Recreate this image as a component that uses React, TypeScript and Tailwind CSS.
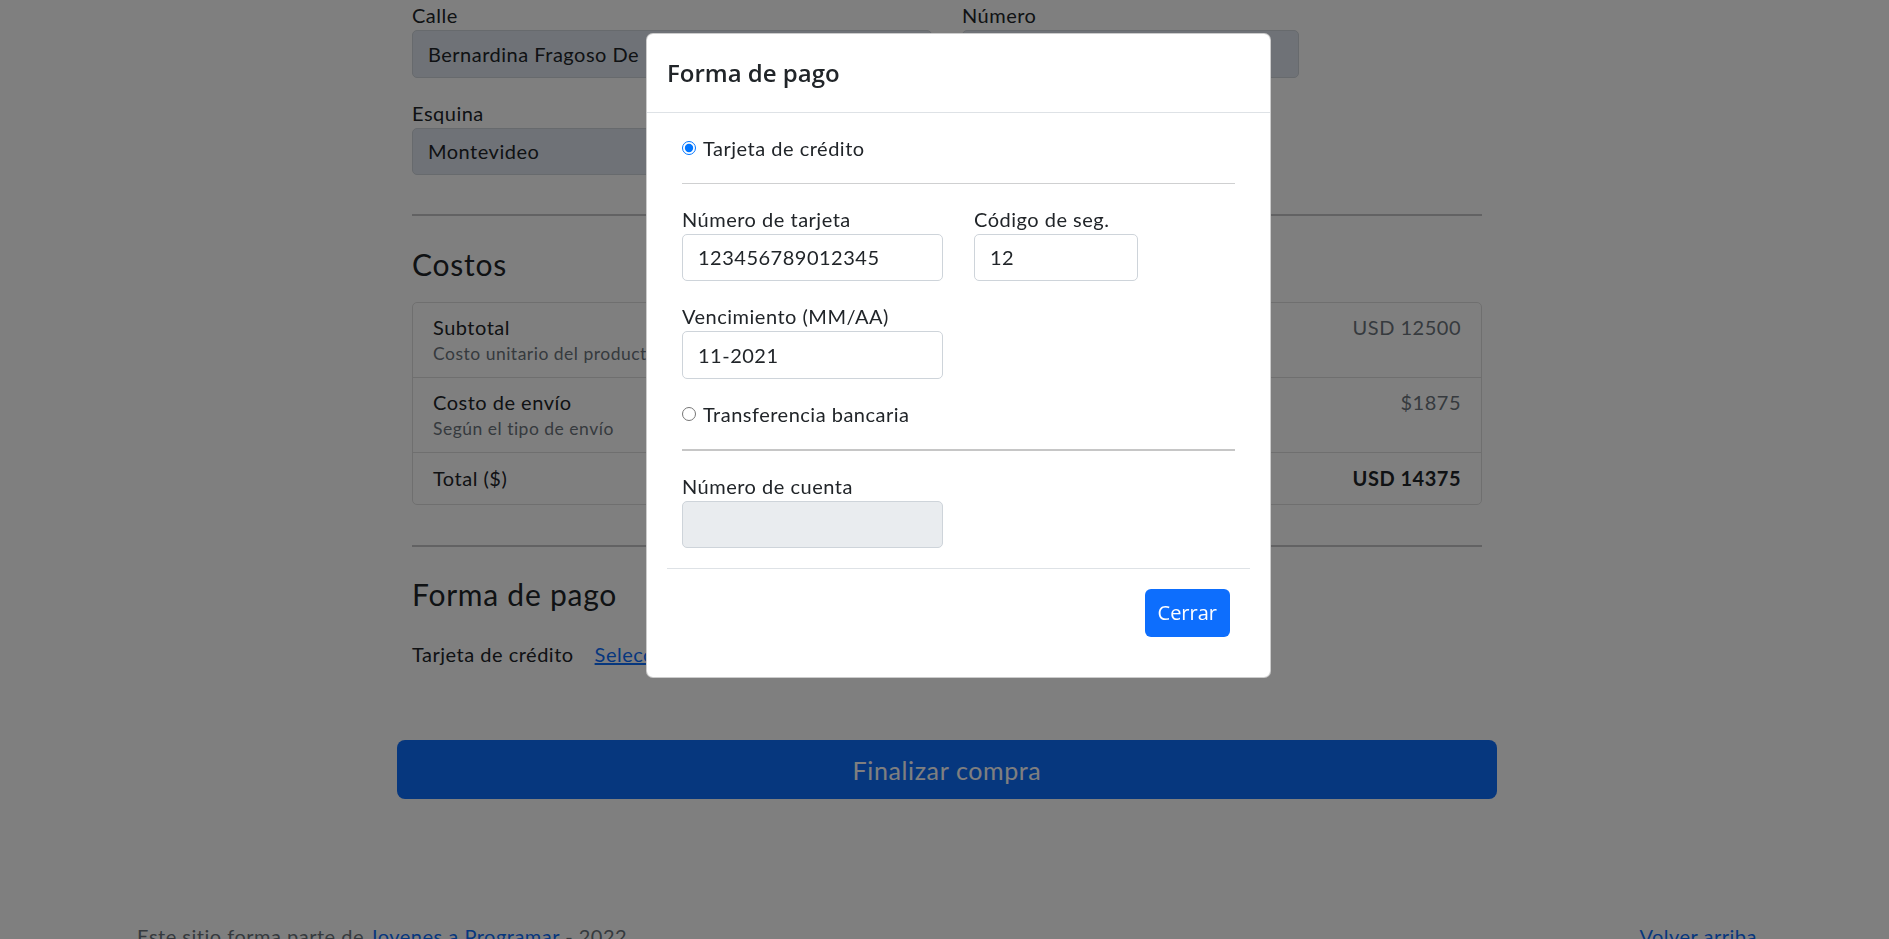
const pageInput =
  "block h-[47.5px] w-full rounded-[5px] border border-[#ced4da] bg-[#dfe5ef] px-[15px] text-[20px] text-[#212529] outline-none";

const modalInput =
  "block h-[47.5px] w-full rounded-[5px] border border-[#ced4da] px-[15px] text-[20px] text-[#212529] outline-none";

const CostRow = ({
  title,
  note,
  value,
}: {
  title: string;
  note: string;
  value: string;
}) => (
  <li className="flex justify-between border-b border-[#dfdfdf] px-[20px] py-[10px]">
    <div>
      <h6 className="text-[20px] font-normal leading-[28px]">{title}</h6>
      <small className="block text-[17.5px] leading-[26px] text-[#6c757d]">{note}</small>
    </div>
    <span className="leading-[28px] text-[#6c757d]">{value}</span>
  </li>
);

export default function App() {
  return (
    <div className="relative h-screen overflow-hidden bg-white pl-[5px] font-['Lato',sans-serif] text-[20px] leading-[30px] tracking-[0.025em] text-[#212529]">
      {/* Page content behind the modal */}
      <main className="mx-auto w-[1100px]">
        <div className="px-[15px]">
          <div className="flex gap-[30px]">
            <div className="w-[520px]">
              <label className="block">Calle</label>
              <input className={pageInput} defaultValue="Bernardina Fragoso De" readOnly />
              <label className="mt-[20px] block">Esquina</label>
              <input className={pageInput} defaultValue="Montevideo" readOnly />
            </div>
            <div className="w-[337px]">
              <label className="block">Número</label>
              <input className={pageInput} defaultValue="" readOnly />
            </div>
          </div>

          <hr className="mt-[39px] border-t-2 border-[#c4c5c6]" />

          <h4 className="mt-[30px] text-[30px] font-normal leading-[36px] tracking-[0.025em]">Costos</h4>
          <ul className="mt-[20px] rounded-[5px] border border-[#dfdfdf]">
            <CostRow title="Subtotal" note="Costo unitario del producto por cantidad" value="USD 12500" />
            <CostRow title="Costo de envío" note="Según el tipo de envío" value="$1875" />
            <li className="flex justify-between px-[20px] py-[10px] leading-[31px]">
              <span>Total ($)</span>
              <strong>USD 14375</strong>
            </li>
          </ul>

          <hr className="mt-[40px] border-t-2 border-[#c4c5c6]" />

          <h4 className="mt-[29px] text-[30px] font-normal leading-[36px] tracking-[0.025em]">Forma de pago</h4>
          <div className="mt-[27px] flex">
            <span>Tarjeta de crédito</span>
            <a href="#" className="ml-[21px] text-[#0d6efd] underline">
              Seleccionar
            </a>
          </div>
        </div>

        <button className="mt-[71px] h-[59px] w-full rounded-[8px] bg-[#0d6efd] text-[25px] tracking-[0.025em] text-white">
          Finalizar compra
        </button>
      </main>

      <footer className="mx-auto mt-[122px] flex w-[1650px] justify-between px-[15px] text-[#6c757d]">
        <p>
          Este sitio forma parte de{" "}
          <a href="#" className="text-[#0d6efd]">
            Jovenes a Programar
          </a>{" "}
          - 2022
        </p>
        <a href="#" className="text-[#0d6efd]">
          Volver arriba
        </a>
      </footer>

      {/* Backdrop */}
      <div className="fixed inset-0 bg-black/50" />

      {/* Modal */}
      <div className="fixed left-[646px] top-[33px] w-[625px] rounded-[7px] border border-black/20 bg-white">
        <div className="border-b border-[#dee2e6] px-[20px] py-[20px]">
          <h5 className="font-['Open_Sans',sans-serif] text-[24px] font-semibold leading-[37.5px] tracking-normal text-[#212529]">
            Forma de pago
          </h5>
        </div>
        <div className="p-[20px]">
          <div className="px-[15px] pb-[20px]">
            <label className="flex items-center gap-[7px]">
              <input type="radio" name="pago" defaultChecked className="m-0 h-[14px] w-[14px]" />
              Tarjeta de crédito
            </label>
            <hr className="my-[20px] border-[#cfd0d1]" />
            <div className="flex gap-[31px]">
              <div className="w-[261px]">
                <label className="block">Número de tarjeta</label>
                <input className={`${modalInput} bg-white`} defaultValue="123456789012345" readOnly />
              </div>
              <div className="w-[164px]">
                <label className="block">Código de seg.</label>
                <input className={`${modalInput} bg-white`} defaultValue="12" readOnly />
              </div>
            </div>
            <div className="mt-[20px] w-[261px]">
              <label className="block">Vencimiento (MM/AA)</label>
              <input className={`${modalInput} bg-white`} defaultValue="11-2021" readOnly />
            </div>
            <label className="mt-[20px] flex items-center gap-[7px]">
              <input type="radio" name="pago" className="m-0 h-[14px] w-[14px]" />
              Transferencia bancaria
            </label>
            <hr className="my-[20px] border-t-2 border-[#c6c6c6]" />
            <div className="w-[261px]">
              <label className="block">Número de cuenta</label>
              <input className={`${modalInput} bg-[#e9ecef]`} disabled />
            </div>
          </div>
          <div className="flex justify-end border-t border-[#dee2e6] p-[20px]">
            <button className="h-[48px] rounded-[6px] bg-[#0d6efd] px-[13px] font-['Open_Sans',sans-serif] text-[20px] tracking-normal text-white">
              Cerrar
            </button>
          </div>
        </div>
      </div>
    </div>
  );
}
